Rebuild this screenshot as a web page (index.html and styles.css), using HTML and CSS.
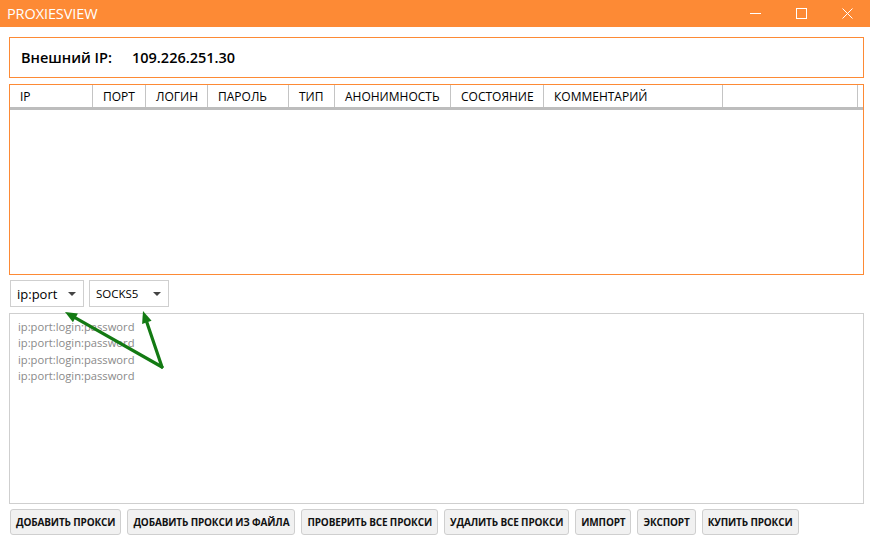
FILE: index.html
```html
<!DOCTYPE html>
<html lang="ru">
<head>
  <meta charset="UTF-8" />
  <title>ProxiesView</title>
  <link rel="stylesheet" href="styles.css">
</head>
<body>
  <div class="titlebar">
    <span class="app-name">PROXIESVIEW</span>
    <div class="win-controls">
      <span class="win-btn">
        <svg width="11" height="11" viewBox="0 0 11 11"><path d="M0 5.5H11" stroke="#fff" stroke-width="1"/></svg>
      </span>
      <span class="win-btn">
        <svg width="11" height="11" viewBox="0 0 11 11"><rect x="0.5" y="0.5" width="10" height="10" fill="none" stroke="#fff" stroke-width="1"/></svg>
      </span>
      <span class="win-btn">
        <svg width="11" height="11" viewBox="0 0 11 11"><path d="M0.5 0.5L10.5 10.5M10.5 0.5L0.5 10.5" stroke="#fff" stroke-width="1"/></svg>
      </span>
    </div>
  </div>

  <div class="content">
    <div class="ip-box">
      <span class="ip-label">Внешний IP:</span>
      <span class="ip-value">109.226.251.30</span>
    </div>

    <div class="grid">
      <div class="grid-head">
        <div class="col">IP</div>
        <div class="col">ПОРТ</div>
        <div class="col">ЛОГИН</div>
        <div class="col">ПАРОЛЬ</div>
        <div class="col">ТИП</div>
        <div class="col">АНОНИМНОСТЬ</div>
        <div class="col">СОСТОЯНИЕ</div>
        <div class="col">КОММЕНТАРИЙ</div>
        <div class="col"></div>
        <div class="col"></div>
      </div>
      <div class="grid-body"></div>
    </div>

    <div class="options">
      <div class="combo combo-format">ip:port <span class="caret"></span></div>
      <div class="combo combo-type">SOCKS5 <span class="caret"></span></div>
      <!-- hint arrows pointing at the two combo boxes -->
      <svg class="hint-arrows" width="180" height="100" viewBox="0 0 180 100">
        <g stroke="#137a13" stroke-width="3.2" fill="none" stroke-linecap="round">
          <path d="M153 87 L66.4 37.9"/>
          <path d="M153 87 L137.9 42.4"/>
        </g>
        <g fill="#137a13">
          <path d="M56 32 L68.9 33.6 L63.9 42.3 Z"/>
          <path d="M134 31 L142.6 40.8 L133.1 44 Z"/>
        </g>
      </svg>
    </div>

    <div class="proxy-input">
      <div class="placeholder">ip:port:login:password</div>
      <div class="placeholder">ip:port:login:password</div>
      <div class="placeholder">ip:port:login:password</div>
      <div class="placeholder">ip:port:login:password</div>
    </div>

    <div class="actions">
      <button>ДОБАВИТЬ ПРОКСИ</button>
      <button>ДОБАВИТЬ ПРОКСИ ИЗ ФАЙЛА</button>
      <button>ПРОВЕРИТЬ ВСЕ ПРОКСИ</button>
      <button>УДАЛИТЬ ВСЕ ПРОКСИ</button>
      <button>ИМПОРТ</button>
      <button>ЭКСПОРТ</button>
      <button>КУПИТЬ ПРОКСИ</button>
    </div>
  </div>
</body>
</html>
```

FILE: styles.css
```css
body {
  margin: 0;
  font-family: 'Open Sans', 'Noto Sans', sans-serif;
  background: #fff;
  color: #000;
  width: 870px;
  height: 543px;
  overflow: hidden;
}

.titlebar {
  height: 27px;
  background: #fd8a35;
  display: flex;
  align-items: center;
  justify-content: space-between;
  color: #fff;
}

.app-name {
  padding-left: 7px;
  font-size: 14.5px;
  letter-spacing: -0.1px;
}

.win-controls {
  display: flex;
  height: 100%;
}

.win-btn {
  width: 46px;
  display: flex;
  align-items: center;
  justify-content: center;
}

.content {
  padding: 10px 6px 0 9px;
  display: flex;
  flex-direction: column;
}

.ip-box {
  border: 1px solid #fd8a35;
  height: 39px;
  display: flex;
  align-items: center;
  padding-left: 11px;
  font-size: 14.5px;
  font-weight: 600;
}

.ip-label {
  width: 111px;
}

.grid {
  margin-top: 6px;
  border: 1px solid #fd8a35;
  height: 189px;
  display: flex;
  flex-direction: column;
}

.grid-head {
  display: grid;
  grid-template-columns: 83px 53px 62px 81px 46px 116px 93px 179px 135px 1fr;
  height: 22px;
  border-bottom: 3px solid #bdbdbd;
  font-size: 12px;
}

.col {
  border-right: 1px solid #c4c4c4;
  padding-left: 10px;
  display: flex;
  align-items: center;
}

.col:last-child {
  border-right: none;
}

.options {
  position: relative;
  display: flex;
  gap: 5px;
  margin: 5px 0 6px 1px;
}

.combo {
  height: 25px;
  border: 1px solid #cfcfcf;
  display: flex;
  align-items: center;
  justify-content: space-between;
  padding: 0 7px 0 6px;
}

.combo-format {
  width: 59px;
  font-size: 13px;
}

.combo-type {
  width: 65px;
  font-size: 11.5px;
}

.caret {
  width: 0;
  height: 0;
  border-left: 4px solid transparent;
  border-right: 4px solid transparent;
  border-top: 4px solid #444;
}

.hint-arrows {
  position: absolute;
  left: -1px;
  top: 0;
  overflow: visible;
  z-index: 2;
}

.proxy-input {
  border: 1px solid #cfcfcf;
  height: 179px;
  padding: 5px 8px;
}

.placeholder {
  font-size: 11.2px;
  line-height: 16.3px;
  color: #8a8a8a;
}

.actions {
  display: flex;
  gap: 6px;
  margin-top: 5px;
  padding-left: 1px;
}

.actions button {
  height: 26px;
  padding: 0 5px;
  border: 1px solid #cfcfcf;
  border-radius: 3px;
  background: #f1f1f1;
  font-family: 'Open Sans', 'Noto Sans', sans-serif;
  font-size: 10px;
  font-weight: 700;
  color: #111;
  letter-spacing: -0.15px;
}
```
